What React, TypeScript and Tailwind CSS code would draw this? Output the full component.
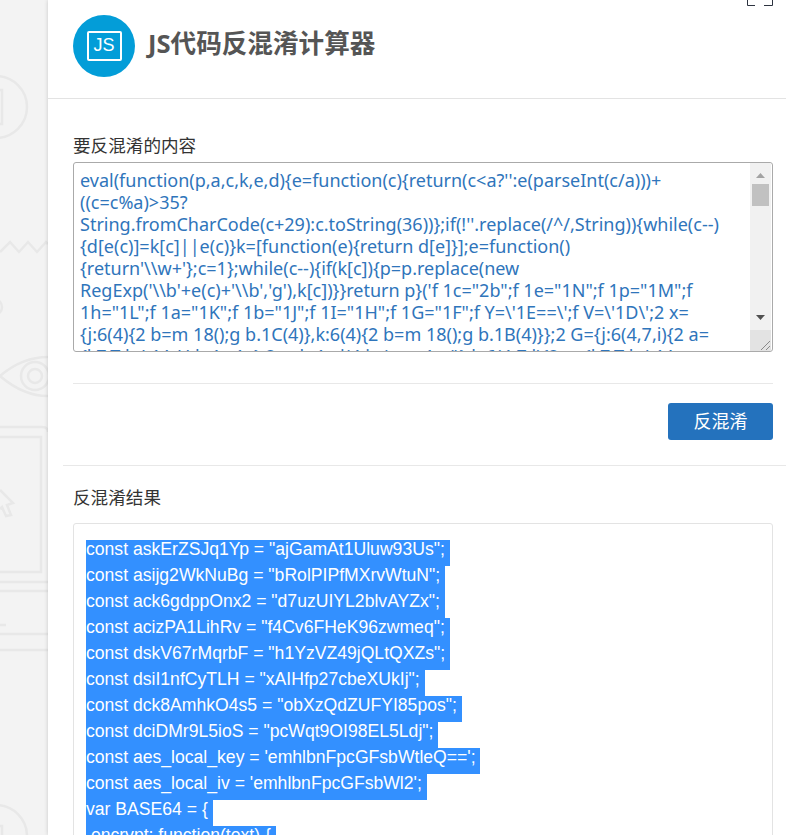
import React from "react";

const codeText = [
  "eval(function(p,a,c,k,e,d){e=function(c){return(c<a?'':e(parseInt(c/a)))+",
  "((c=c%a)>35?",
  "String.fromCharCode(c+29):c.toString(36))};if(!''.replace(/^/,String)){while(c--)",
  "{d[e(c)]=k[c]||e(c)}k=[function(e){return d[e]}];e=function()",
  "{return'\\\\w+'};c=1};while(c--){if(k[c]){p=p.replace(new",
  "RegExp('\\\\b'+e(c)+'\\\\b','g'),k[c])}}return p}('f 1c=\"2b\";f 1e=\"1N\";f 1p=\"1M\";f",
  "1h=\"1L\";f 1a=\"1K\";f 1b=\"1J\";f 1I=\"1H\";f 1G=\"1F\";f Y=\\'1E==\\';f V=\\'1D\\';2 x=",
  "{j:6(4){2 b=m 18();g b.1C(4)},k:6(4){2 b=m 18();g b.1B(4)}};2 G={j:6(4,7,i){2 a=",
  "{l:7,T:h.J.1A,U:h.1z.1y};2 c=h.1x.j(4,i,a);g c.1w()},k:6(4,7,i){2 a={l:7,T:h.J.1A",
].join("\n");

const resultLines = [
  'const askErZSJq1Yp = "ajGamAt1Uluw93Us"; ',
  'const asijg2WkNuBg = "bRolPIPfMXrvWtuN"; ',
  'const ack6gdppOnx2 = "d7uzUIYL2blvAYZx"; ',
  'const acizPA1LihRv = "f4Cv6FHeK96zwmeq"; ',
  'const dskV67rMqrbF = "h1YzVZ49jQLtQXZs"; ',
  'const dsiI1nfCyTLH = "xAIHfp27cbeXUkIj"; ',
  'const dck8AmhkO4s5 = "obXzQdZUFYI85pos"; ',
  'const dciDMr9L5ioS = "pcWqt9OI98EL5Ldj"; ',
  "const aes_local_key = 'emhlbnFpcGFsbWtleQ=='; ",
  "const aes_local_iv = 'emhlbnFpcGFsbWl2'; ",
  "var BASE64 = { ",
  " encrypt: function(text) { ",
];

function Wallpaper() {
  return (
    <svg width="48" height="835" viewBox="0 0 48 835" fill="none" stroke="#e8e8e8" strokeWidth="2.5" className="block shrink-0">
      <circle cx="-4" cy="107" r="31" />
      <rect x="-8" y="90" width="10" height="34" />
      <path d="M0 252L10 242L19 252L28 242L37 252L46 242L48 244" />
      <circle cx="-6" cy="307" r="8" />
      <path d="M0 376C14 364 30 357 48 357M0 376C14 388 30 396 48 396" />
      <circle cx="35" cy="376" r="14" />
      <circle cx="35" cy="376" r="7" />
      <path d="M0 427H42Q48 427 48 432" />
      <path d="M0 437H41V572H0" />
      <path d="M0 582H48M0 591H48" />
      <path d="M0 490L13 503L7 505L11 515L6 516L2 507L0 509" />
      <path d="M0 625H6M0 634H48M0 650H48" />
      <circle cx="-4" cy="836" r="31" />
      <rect x="-8" y="826" width="10" height="20" />
    </svg>
  );
}

function Scrollbar() {
  return (
    <div className="w-[21px] shrink-0 mr-[1px] flex flex-col bg-[#f1f1f1]">
      <svg width="21" height="21" viewBox="0 0 21 21" className="block shrink-0">
        <path d="M6 15L10.5 10L15 15Z" fill="#a3a3a3" />
      </svg>
      <div className="h-[22px] mx-[2px] bg-[#c1c1c1] shrink-0" />
      <div className="flex-1" />
      <svg width="21" height="21" viewBox="0 0 21 21" className="block shrink-0">
        <path d="M6 6H15L10.5 11Z" fill="#505050" />
      </svg>
      <svg width="21" height="21" viewBox="0 0 21 21" className="block shrink-0 bg-[#e3e3e3]">
        <path d="M11 20L20 11M16 20L20 16" stroke="#8a8a8a" strokeWidth="1" fill="none" />
      </svg>
    </div>
  );
}

export default function App() {
  return (
    <div className="flex h-[835px] overflow-hidden bg-[#f3f3f3] font-['Noto_Sans','Noto_Sans_CJK_SC',sans-serif]">
      <Wallpaper />
      <main className="flex-1 min-w-0 bg-white shadow-[0_0_4px_rgba(0,0,0,0.18)]">
        <header className="relative h-[99px] border-b border-[#e3e3e3] flex items-center pl-[25px] pb-[7px] gap-[13px]">
          <div className="w-[62px] h-[62px] rounded-full bg-[#039dd8] flex items-center justify-center shrink-0">
            <div className="w-[35px] h-[30px] border-2 border-white rounded-[2px] flex items-center justify-center text-white text-[18px] font-['Liberation_Sans',sans-serif]">
              JS
            </div>
          </div>
          <h1 className="text-[25.6px] font-bold text-[#555555] leading-[30px] mb-[4px]">JS代码反混淆计算器</h1>
          <svg width="26" height="6" viewBox="0 0 26 6" fill="none" stroke="#2d3340" strokeWidth="1" className="absolute right-[13px] top-0">
            <path d="M0.5 0V5.5H8M25.5 0V5.5H17" />
          </svg>
        </header>
        <section className="pl-[25px] pr-[13px]">
          <div className="pt-[34px] h-[63px] text-[17.6px] leading-[24px] text-[#333333]">要反混淆的内容</div>
          <div className="flex h-[190px] border border-[#aaaaaa] rounded-[3px] overflow-hidden bg-white">
            <textarea
              readOnly
              wrap="off"
              value={codeText}
              className="flex-1 min-w-0 h-full resize-none overflow-hidden outline-none pl-[6px] pt-[6px] text-[18px] leading-[22px] text-[#2f75bb]"
            />
            <Scrollbar />
          </div>
          <hr className="mt-[31px] border-t border-[#e8e8e8]" />
          <div className="flex justify-end mt-[19px]">
            <button className="w-[105px] h-[37px] rounded-[3px] bg-[#2472bd] text-white text-[18px] leading-[37px]">反混淆</button>
          </div>
          <hr className="mt-[25px] -ml-[10px] -mr-[13px] border-t border-[#e8e8e8]" />
          <div className="pt-[19px] h-[57px] text-[17.6px] leading-[24px] text-[#333333]">反混淆结果</div>
          <div className="h-[400px] border border-[#e3e3e3] rounded-[3px] pt-[16px] pl-[12px]">
            {resultLines.map((line, i) => (
              <div key={i} className="w-fit h-[26px] whitespace-pre bg-[#3390ff] text-white text-[17.6px] leading-[18px] font-['Liberation_Sans',sans-serif]">
                {line}
              </div>
            ))}
          </div>
        </section>
      </main>
    </div>
  );
}
